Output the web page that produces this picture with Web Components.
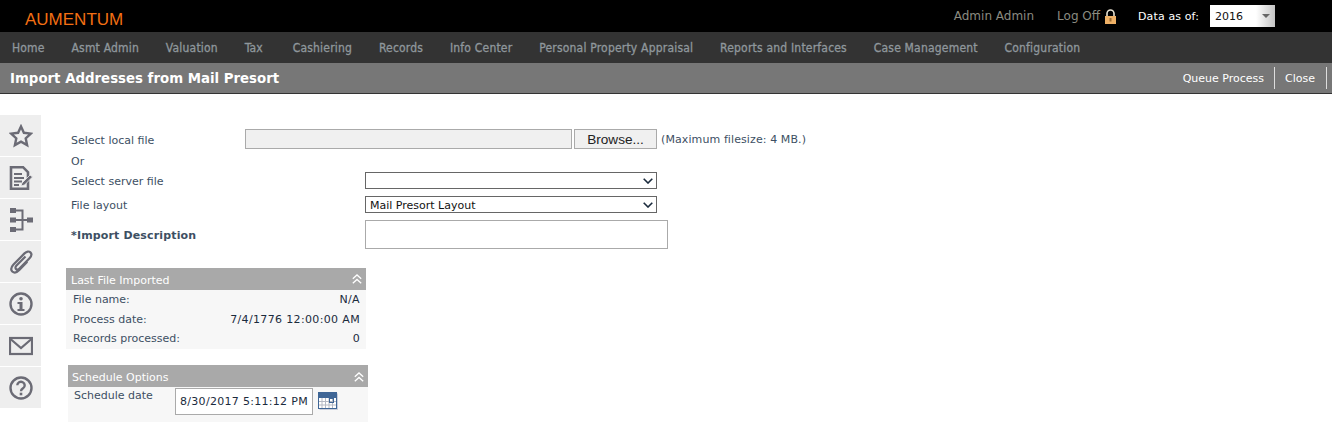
<!DOCTYPE html>
<html>
<head>
<meta charset="utf-8">
<title>Import Addresses from Mail Presort</title>
<style>
    html, body { margin: 0; padding: 0; background: #fff; }
    body { font: 11px "DejaVu Sans", sans-serif; color: #3d4f63; height: 422px; overflow: hidden; }
    .page { display: flex; flex-direction: row; }
    nav-link.tax { margin-right: 3px; }
</style>
</head>
<body>
<top-bar></top-bar>
<main-nav>
    <nav-link>Home</nav-link>
    <nav-link>Asmt Admin</nav-link>
    <nav-link>Valuation</nav-link>
    <nav-link class="tax">Tax</nav-link>
    <nav-link>Cashiering</nav-link>
    <nav-link>Records</nav-link>
    <nav-link>Info Center</nav-link>
    <nav-link>Personal Property Appraisal</nav-link>
    <nav-link>Reports and Interfaces</nav-link>
    <nav-link>Case Management</nav-link>
    <nav-link>Configuration</nav-link>
</main-nav>
<title-bar heading="Import Addresses from Mail Presort"></title-bar>
<div class="page">
    <side-rail></side-rail>
    <import-form></import-form>
</div>

<script>
const tmplTopBar = document.createElement('template');
tmplTopBar.innerHTML = `
    <style>
        :host { display: flex; height: 32px; background: #000; align-items: center; font: 11px "DejaVu Sans", sans-serif; }
        .brand { margin-left: 25px; margin-top: 7px; color: #f36f13; font: 17px "Liberation Sans", sans-serif; }
        .user { margin-left: auto; color: #8b8b80; font-size: 12px; }
        .logoff { margin-left: 23px; color: #8b8b80; font-size: 12px; display: flex; align-items: center; gap: 4px; }
        .asof { margin-left: 21px; color: #fff; letter-spacing: .12px; }
        .year { margin-left: 11px; margin-right: 57px; width: 65px; height: 22px; box-sizing: border-box; background: #fff; display: flex; align-items: center; color: #111; padding-left: 5px; position: relative; }
        .year .btn { position: absolute; right: 0; top: 0; bottom: 0; width: 19px; background: linear-gradient(90deg, #fff, #c4c4c4); display: flex; align-items: center; justify-content: center; }
    </style>
    <div class="brand">AUMENTUM</div>
    <div class="user">Admin Admin</div>
    <div class="logoff">Log Off
        <svg width="13" height="15" viewBox="0 0 13 15">
            <path d="M3 7V4.500a3.500 3.500 0 0 1 7 0V7" fill="none" stroke="#e8e2d2" stroke-width="1.600"/>
            <rect x="1" y="7" width="11" height="8" fill="#eeb066"/>
            <rect x="5.500" y="9" width="2" height="3.500" fill="#9a6a30"/>
        </svg>
    </div>
    <div class="asof">Data as of:</div>
    <div class="year">2016
        <span class="btn"><svg width="8" height="4"><path d="M0 0h8L4 4z" fill="#666"/></svg></span>
    </div>
`;
class TopBar extends HTMLElement {
    constructor() {
        super()
        this.attachShadow({ mode: 'open' })
        this.shadowRoot.appendChild(tmplTopBar.content.cloneNode(true))
    }
}
customElements.define('top-bar', TopBar);

const tmplMainNav = document.createElement('template');
tmplMainNav.innerHTML = `
    <style>
        :host { display: flex; height: 31px; background: #333; align-items: center; padding-left: 12px; gap: 26.800px; }
    </style>
    <slot></slot>
`;
class MainNav extends HTMLElement {
    constructor() {
        super()
        this.attachShadow({ mode: 'open' })
        this.shadowRoot.appendChild(tmplMainNav.content.cloneNode(true))
    }
}
customElements.define('main-nav', MainNav);

const tmplNavLink = document.createElement('template');
tmplNavLink.innerHTML = `
    <style>
        :host { display: block; color: #8f979c; font: 12px "DejaVu Sans Condensed", "DejaVu Sans", sans-serif; letter-spacing: .2px; -webkit-text-stroke: .3px #8f979c; }
    </style>
    <slot></slot>
`;
class NavLink extends HTMLElement {
    constructor() {
        super()
        this.attachShadow({ mode: 'open' })
        this.shadowRoot.appendChild(tmplNavLink.content.cloneNode(true))
    }
}
customElements.define('nav-link', NavLink);

const tmplTitleBar = document.createElement('template');
tmplTitleBar.innerHTML = `
    <style>
        :host { display: flex; height: 30px; background: #777; border-bottom: 1px solid #333; align-items: center; padding-left: 10px; font: 11px "DejaVu Sans", sans-serif; }
        h1 { margin: 0; font: bold 13.333px "DejaVu Sans", sans-serif; color: #fff; }
        .actions { margin-left: auto; display: flex; height: 22px; margin-right: 5px; color: #fff; }
        .actions div { display: flex; align-items: center; border-right: 1px solid #ddd; }
        .queue { padding: 0 10px 0 11px; }
        .close { padding: 0 11px 0 10px; }
    </style>
    <h1 id="heading"></h1>
    <div class="actions">
        <div class="queue">Queue Process</div>
        <div class="close">Close</div>
    </div>
`;
class TitleBar extends HTMLElement {
    constructor() {
        super()
        this.attachShadow({ mode: 'open' })
        this.shadowRoot.appendChild(tmplTitleBar.content.cloneNode(true))
        this.shadowRoot.getElementById('heading').textContent = this.getAttribute('heading')
    }
}
customElements.define('title-bar', TitleBar);

const railIcons = [
    '<path d="M12 2.500l2.900 6.300 6.900.8-5.100 4.700 1.400 6.800L12 17.700l-6.100 3.400 1.400-6.800L2.200 9.600l6.900-.8z" fill="none" stroke-width="2.400"/>',
    '<path d="M2 1.200h12l5 5v16.600H2z" fill="none" stroke-width="2.600"/><path d="M5 8h8M5 12h10M5 15.500h8M5 19h5" fill="none" stroke-width="2"/><path d="M13 17l8-8 2.500 2-8 8-3.500 1z" fill="#6b6b75" stroke="#eee" stroke-width=".8"/>',
    '<rect x="1" y="0" width="6" height="5" stroke="none"/><rect x="1" y="9.500" width="6" height="5" stroke="none"/><rect x="1" y="19" width="6" height="5" stroke="none"/><rect x="18" y="9.500" width="6" height="5" stroke="none"/><path d="M6 2.500h7.500v19H6M6 12h13" fill="none" stroke-width="2"/>',
    '<path d="M16.500 6.500L7.500 15.500c-1.300 1.400-1.300 2.800-.4 3.600.9.800 2.300.6 3.600-.7L20.500 8.300c2.200-2.300 2.300-4.500.9-5.900-1.400-1.400-3.700-1.200-5.900 1L4.500 14.500c-2.800 3-2.700 5.400-1.200 7 1.600 1.500 4.200 1.500 7-1.400l8-8.300" fill="none" stroke-width="2.200"/>',
    '<circle cx="12" cy="12" r="10.500" fill="none" stroke-width="2.400"/><circle cx="12" cy="6.800" r="1.800" stroke="none"/><path d="M8.500 10h5v7H15.500v2h-7v-2h2v-5h-2z" stroke="none"/>',
    '<rect x="1" y="4" width="22" height="16" fill="none" stroke-width="2.200"/><path d="M1.500 5L12 14 22.500 5" fill="none" stroke-width="2.200"/>',
    '<circle cx="12" cy="12" r="10.500" fill="none" stroke-width="2.400"/><path d="M8.300 9.300a3.700 3.500 0 1 1 5.800 2.900c-1.300.9-2.100 1.400-2.100 3" fill="none" stroke-width="2.400"/><rect x="10.700" y="16.700" width="2.600" height="2.600" stroke="none"/>'
];

const tmplSideRail = document.createElement('template');
tmplSideRail.innerHTML = `
    <style>
        :host { display: flex; flex-direction: column; gap: 1px; width: 41px; margin-top: 21px; flex: none; }
        .item { height: 41px; background: #eee; display: flex; align-items: center; justify-content: center; }
        svg { display: block; fill: #6b6b75; stroke: #6b6b75; }
    </style>
`;
class SideRail extends HTMLElement {
    constructor() {
        super()
        this.attachShadow({ mode: 'open' })
        this.shadowRoot.appendChild(tmplSideRail.content.cloneNode(true))
        railIcons.forEach(icon => {
            const item = document.createElement('div')
            item.className = 'item'
            item.innerHTML = `<svg width="24" height="24" viewBox="0 0 24 24">${icon}</svg>`
            this.shadowRoot.appendChild(item)
        })
    }
}
customElements.define('side-rail', SideRail);

const tmplInfoPanel = document.createElement('template');
tmplInfoPanel.innerHTML = `
    <style>
        :host { display: block; width: 300px; background: #f7f7f7; }
        .head { height: 22px; box-sizing: border-box; background: #a9a9a9; color: #fff; display: flex; align-items: center; justify-content: space-between; padding: var(--head-top, 2px) 4px 0 var(--head-left, 5px); }
        svg { display: block; margin-top: -2px; }
    </style>
    <div class="head">
        <span id="title"></span>
        <svg width="10" height="10" viewBox="0 0 10 10"><path d="M.8 4.700L5 .9l4.200 3.800M.8 9.300L5 5.500l4.200 3.800" fill="none" stroke="#fff" stroke-width="1.300"/></svg>
    </div>
    <slot></slot>
`;
class InfoPanel extends HTMLElement {
    constructor() {
        super()
        this.attachShadow({ mode: 'open' })
        this.shadowRoot.appendChild(tmplInfoPanel.content.cloneNode(true))
        this.shadowRoot.getElementById('title').textContent = this.getAttribute('heading')
    }
}
customElements.define('info-panel', InfoPanel);

const tmplInfoRow = document.createElement('template');
tmplInfoRow.innerHTML = `
    <style>
        :host { display: flex; justify-content: space-between; height: 19.500px; align-items: center; padding: 0 6px 0 7px; }
        .value { color: #1b2b3d; letter-spacing: .35px; }
    </style>
    <span id="label"></span>
    <span class="value" id="value"></span>
`;
class InfoRow extends HTMLElement {
    constructor() {
        super()
        this.attachShadow({ mode: 'open' })
        this.shadowRoot.appendChild(tmplInfoRow.content.cloneNode(true))
        this.shadowRoot.getElementById('label').textContent = this.getAttribute('label')
        this.shadowRoot.getElementById('value').textContent = this.getAttribute('value')
    }
}
customElements.define('info-row', InfoRow);

const tmplFileSelect = document.createElement('template');
tmplFileSelect.innerHTML = `
    <style>
        :host { display: block; position: relative; width: 292px; height: 17px; }
        select { display: block; appearance: none; width: 292px; height: 17px; box-sizing: border-box; margin: 0; padding: 2px 0 0 4px; background: #fff; border: 1px solid #666; border-radius: 0; color: #111; font: 11px "DejaVu Sans", sans-serif; }
        svg { position: absolute; right: 4px; top: 6px; pointer-events: none; }
    </style>
    <select><option id="opt"></option></select>
    <svg width="10" height="6" viewBox="0 0 10 6"><path d="M.7.7L5 5l4.300-4.300" fill="none" stroke="#1b2b3d" stroke-width="1.600"/></svg>
`;
class FileSelect extends HTMLElement {
    constructor() {
        super()
        this.attachShadow({ mode: 'open' })
        this.shadowRoot.appendChild(tmplFileSelect.content.cloneNode(true))
        this.shadowRoot.getElementById('opt').textContent = this.getAttribute('value') || ''
    }
}
customElements.define('file-select', FileSelect);

const tmplImportForm = document.createElement('template');
tmplImportForm.innerHTML = `
    <style>
        :host { display: block; margin-left: 25px; }
        .row { display: flex; align-items: center; padding-left: 5px; }
        .label { flex: none; }
        .file { margin-top: 35px; height: 20px; }
        .file .label { width: 174px; padding-top: 2px; }
        .filebox { width: 327px; height: 20px; box-sizing: border-box; background: #f0f0f0; border: 1px solid #aaa; }
        button { margin: 0 0 0 2px; padding: 0; width: 83px; height: 20px; box-sizing: border-box; background: #f0f0f0; border: 1px solid #aaa; color: #222; font: 13.600px "Liberation Sans", sans-serif; }
        .note { margin-left: 4px; letter-spacing: .1px; }
        .or { margin-top: 4px; height: 17px; }
        .wide .label { width: 294px; padding-top: 2px; }
        .server { margin-top: 2px; height: 17px; }
        .layout { margin-top: 7px; height: 17px; }
        .desc { margin-top: 7px; height: 29px; }
        .desc .label { font-weight: bold; letter-spacing: .15px; }
        input { width: 303px; height: 29px; box-sizing: border-box; margin: 0; border: 1px solid #aaa; background: #fff; font: inherit; }
        .last { margin-top: 19px; }
        .sched { margin: 16px 0 0 2px; height: 57px; --head-top: 4px; --head-left: 4px; }
        .sched-row { display: flex; padding: 1px 0 0 6px; }
        .sched-row span { width: 101px; padding-top: 1px; }
        .date { width: 138px; height: 27px; box-sizing: border-box; border: 1px solid #aaa; background: #fff; color: #1b2b3d; display: flex; align-items: center; padding-left: 4px; white-space: nowrap; letter-spacing: .3px; }
        .sched-row svg { margin: 4px 0 0 5px; }
    </style>
    <div class="row file">
        <div class="label">Select local file</div>
        <div class="filebox"></div>
        <button>Browse...</button>
        <div class="note">(Maximum filesize: 4 MB.)</div>
    </div>
    <div class="row or">Or</div>
    <div class="row wide server">
        <div class="label">Select server file</div>
        <file-select></file-select>
    </div>
    <div class="row wide layout">
        <div class="label">File layout</div>
        <file-select value="Mail Presort Layout"></file-select>
    </div>
    <div class="row wide desc">
        <div class="label">*Import Description</div>
        <input type="text">
    </div>
    <info-panel class="last" heading="Last File Imported">
        <info-row label="File name:" value="N/A"></info-row>
        <info-row label="Process date:" value="7/4/1776 12:00:00 AM"></info-row>
        <info-row label="Records processed:" value="0"></info-row>
    </info-panel>
    <info-panel class="sched" heading="Schedule Options">
        <div class="sched-row">
            <span>Schedule date</span>
            <div class="date">8/30/2017 5:11:12 PM</div>
            <svg width="20" height="18" viewBox="0 0 20 18">
                <rect x="1.500" y="1.500" width="18.500" height="16.500" fill="#c9cedb"/>
                <rect x=".5" y=".5" width="18" height="16" fill="#fff" stroke="#3f6696"/>
                <rect x="0" y="0" width="19" height="6" fill="#3f6696"/>
                <path d="M4 6v10M7.500 6v10M11 6v10M14.500 6v10M1 9.500h17M1 13h17" stroke="#b5b9c4" stroke-width="1"/>
                <rect x="11.500" y="6.500" width="4" height="4" fill="none" stroke="#3f6696"/>
            </svg>
        </div>
    </info-panel>
`;
class ImportForm extends HTMLElement {
    constructor() {
        super()
        this.attachShadow({ mode: 'open' })
        this.shadowRoot.appendChild(tmplImportForm.content.cloneNode(true))
    }
}
customElements.define('import-form', ImportForm);
</script>
</body>
</html>
